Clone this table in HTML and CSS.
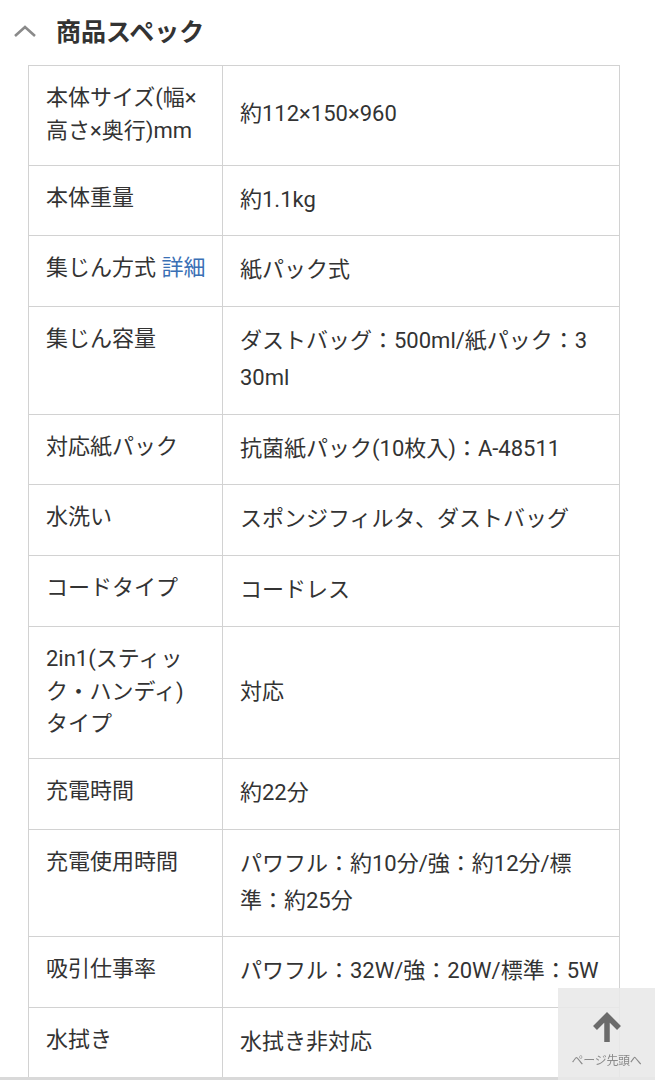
FILE: index.html
```html
<!DOCTYPE html>
<html lang="ja">
<head>
<meta charset="utf-8">
<title>商品スペック</title>
<link rel="stylesheet" href="styles.css">
</head>
<body>
<section class="spec">
  <h2 class="spec-head">
    <svg class="chev" width="24" height="14" viewBox="0 0 24 14"><path d="M2 12 L12 3 L22 12" fill="none" stroke="#8a8a8a" stroke-width="2.6"/></svg>
    <span>商品スペック</span>
  </h2>
  <table class="spec-table">
    <colgroup><col class="c1"><col class="c2"></colgroup>
    <tr><th>本体サイズ(幅×高さ×奥行)mm</th><td>約112×150×960</td></tr>
    <tr><th>本体重量</th><td>約1.1kg</td></tr>
    <tr><th><span class="nowrap">集じん方式 <a class="link">詳細</a></span></th><td>紙パック式</td></tr>
    <tr><th>集じん容量</th><td>ダストバッグ：500ml/紙パック：330ml</td></tr>
    <tr><th>対応紙パック</th><td>抗菌紙パック(10枚入)：A-48511</td></tr>
    <tr><th>水洗い</th><td>スポンジフィルタ、ダストバッグ</td></tr>
    <tr><th>コードタイプ</th><td>コードレス</td></tr>
    <tr><th>2in1(スティック・ハンディ)タイプ</th><td>対応</td></tr>
    <tr><th>充電時間</th><td>約22分</td></tr>
    <tr><th>充電使用時間</th><td>パワフル：約10分/強：約12分/標準：約25分</td></tr>
    <tr><th>吸引仕事率</th><td><span class="nowrap">パワフル：32W/強：20W/標準：5W</span></td></tr>
    <tr><th>水拭き</th><td>水拭き非対応</td></tr>
  </table>
</section>
<div class="bottom-line"></div>
<a class="to-top">
  <svg width="34" height="34" viewBox="0 0 34 34"><path d="M17 31 V6 M5 17 L17 5 L29 17" fill="none" stroke="#6b6b6b" stroke-width="5.5"/></svg>
  <span>ページ先頭へ</span>
</a>
</body>
</html>
```
FILE: styles.css
```css
html, body {
  margin: 0;
  padding: 0;
  background: #fff;
}
body {
  font-family: Roboto, "Noto Sans CJK JP", sans-serif;
  color: #333;
  width: 655px;
  height: 1080px;
  overflow: hidden;
}
.spec-head {
  display: flex;
  align-items: center;
  margin: 0;
  height: 60px;
  padding-left: 13px;
  font-size: 25px;
  font-weight: 700;
  color: #333;
}
.chev {
  margin-right: 19px;
  margin-top: 1px;
}
.spec-table {
  margin: 5px 0 0 28px;
  width: 591px;
  table-layout: fixed;
  border-collapse: collapse;
  border: 1px solid #d2d2d2;
  font-size: 22px;
}
.c1 { width: 194px; }
.c2 { width: 397px; }
.spec-table th,
.spec-table td {
  border: 1px solid #d2d2d2;
  font-weight: 400;
  text-align: left;
}
.spec-table th {
  vertical-align: top;
  line-height: 32.75px;
  padding: 16px 20px 17px 17px;
}
.spec-table td {
  vertical-align: middle;
  line-height: 36.75px;
  padding: 16px 24px 17px 17px;
  word-break: break-all;
}
.nowrap {
  white-space: nowrap;
}
.link {
  color: #3a70b5;
}
.bottom-line {
  position: fixed;
  left: 0;
  right: 0;
  bottom: 0;
  height: 3px;
  background: #d9d9d9;
}
.to-top {
  position: fixed;
  right: 0;
  bottom: 0;
  width: 97px;
  height: 92px;
  background: rgba(232, 232, 232, 0.88);
  display: flex;
  flex-direction: column;
  align-items: center;
  padding-top: 23px;
  box-sizing: border-box;
}
.to-top span {
  margin-top: 6px;
  font-size: 12px;
  color: #8a8a8a;
  letter-spacing: -0.3px;
}
```
